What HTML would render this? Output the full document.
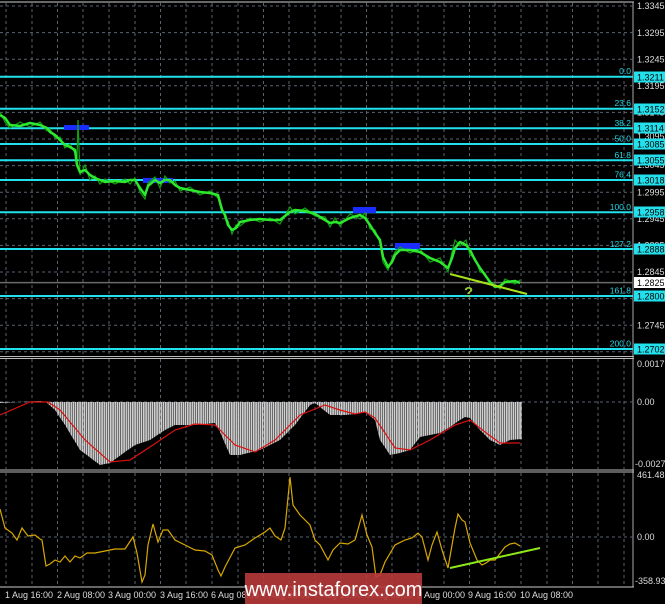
<!DOCTYPE html>
<html><head><meta charset="utf-8"><style>
html,body{margin:0;padding:0;background:#000;width:665px;height:604px;overflow:hidden}
svg{display:block}
text{font-family:"Liberation Sans",sans-serif}
</style></head><body>
<svg width="665" height="604" viewBox="0 0 665 604" xmlns="http://www.w3.org/2000/svg" font-size="9">
<defs>
<pattern id="hb" width="2.2" height="10" patternUnits="userSpaceOnUse">
<rect x="0" y="0" width="1.7" height="10" fill="#d0d0d0"/>
</pattern>
</defs>
<rect width="665" height="604" fill="#000"/>
<line x1="0" y1="2" x2="634" y2="2" stroke="#8a8a8a" stroke-width="1.5"/>
<line x1="633" y1="2" x2="633" y2="587" stroke="#aaa" stroke-width="1"/>
<line x1="0" y1="356.5" x2="634" y2="356.5" stroke="#bbb"/>
<line x1="0" y1="358.5" x2="634" y2="358.5" stroke="#bbb"/>
<line x1="0" y1="470" x2="634" y2="470" stroke="#bbb"/>
<line x1="0" y1="472" x2="634" y2="472" stroke="#bbb"/>
<line x1="0" y1="587" x2="634" y2="587" stroke="#ccc"/>
<g stroke="#5a6470" stroke-dasharray="3,3" stroke-width="1">
<path d="M6 3V356M32 3V356M57.5 3V356M83 3V356M109 3V356M135 3V356M160.5 3V356M186 3V356M212 3V356M238 3V356M263.5 3V356M289 3V356M315 3V356M341 3V356M366.5 3V356M392 3V356M418 3V356M444 3V356M469.5 3V356M495 3V356M521 3V356M547 3V356M572.5 3V356M598 3V356M624 3V356"/>
<path d="M6 359V470M32 359V470M57.5 359V470M83 359V470M109 359V470M135 359V470M160.5 359V470M186 359V470M212 359V470M238 359V470M263.5 359V470M289 359V470M315 359V470M341 359V470M366.5 359V470M392 359V470M418 359V470M444 359V470M469.5 359V470M495 359V470M521 359V470M547 359V470M572.5 359V470M598 359V470M624 359V470"/>
<path d="M6 473V587M32 473V587M57.5 473V587M83 473V587M109 473V587M135 473V587M160.5 473V587M186 473V587M212 473V587M238 473V587M263.5 473V587M289 473V587M315 473V587M341 473V587M366.5 473V587M392 473V587M418 473V587M444 473V587M469.5 473V587M495 473V587M521 473V587M547 473V587M572.5 473V587M598 473V587M624 473V587"/>
<path d="M0 6H633M0 32.6H633M0 59.2H633M0 85.8H633M0 112.4H633M0 139H633M0 165.6H633M0 192.2H633M0 218.8H633M0 245.4H633M0 272H633M0 298.6H633M0 325.2H633M0 351.8H633"/>
<path d="M0 402H633M0 537H633"/>
</g>
<line x1="0" y1="282.6" x2="633" y2="282.6" stroke="#6a6a6a" stroke-width="1.5"/>
<g stroke="#22e0ec" stroke-width="2">
<path d="M0 76.7H633M0 108.7H633M0 128.3H633M0 144H633M0 160.3H633M0 180H633M0 212.2H633M0 249H633M0 296H633M0 349H633"/>
</g>
<g fill="#22d8e4" text-anchor="end" font-size="8.5">
<text x="631" y="74">0.0</text><text x="631" y="106">23.6</text><text x="631" y="126">38.2</text>
<text x="631" y="141.5">50.0</text><text x="631" y="158">61.8</text><text x="631" y="177.5">76.4</text>
<text x="631" y="210">100.0</text><text x="631" y="247">127.2</text><text x="631" y="293.5">161.8</text><text x="631" y="346.5">200.0</text>
</g>
<g fill="#ddd">
<text x="637" y="9">1.3345</text><text x="637" y="36">1.3295</text><text x="637" y="62.5">1.3245</text>
<text x="637" y="89">1.3195</text><text x="637" y="115.5">1.3145</text><text x="637" y="139.5">1.3095</text>
<text x="637" y="168">1.3045</text><text x="637" y="195.5">1.2995</text><text x="637" y="222">1.2945</text>
<text x="637" y="248.5">1.2895</text><text x="637" y="275">1.2845</text><text x="637" y="301.5">1.2795</text>
<text x="637" y="328.5">1.2745</text>
<text x="637" y="367">0.00177</text><text x="637" y="405">0.00</text><text x="635" y="467">-0.00271</text>
<text x="637" y="478">461.4868</text><text x="637" y="540">0.00</text><text x="635" y="584">-358.938</text>
</g>
<g>
<rect x="634" y="71.5" width="31" height="11" fill="#22e0ec"/><text x="637" y="80.5" fill="#000">1.3211</text>
<rect x="634" y="103.5" width="31" height="11" fill="#22e0ec"/><text x="637" y="112.5" fill="#000">1.3152</text>
<rect x="634" y="122.5" width="31" height="11" fill="#22e0ec"/><text x="637" y="131.5" fill="#000">1.3114</text>
<rect x="634" y="138.5" width="31" height="11" fill="#22e0ec"/><text x="637" y="147.5" fill="#000">1.3085</text>
<rect x="634" y="154.5" width="31" height="11" fill="#22e0ec"/><text x="637" y="163.5" fill="#000">1.3055</text>
<rect x="634" y="174.5" width="31" height="11" fill="#22e0ec"/><text x="637" y="183.5" fill="#000">1.3018</text>
<rect x="634" y="206.5" width="31" height="11" fill="#22e0ec"/><text x="637" y="215.5" fill="#000">1.2958</text>
<rect x="634" y="243.5" width="31" height="11" fill="#22e0ec"/><text x="637" y="252.5" fill="#000">1.2888</text>
<rect x="634" y="277" width="31" height="11" fill="#fff"/><text x="637" y="286" fill="#000">1.2825</text>
<rect x="634" y="290.5" width="31" height="11" fill="#22e0ec"/><text x="637" y="299.5" fill="#000">1.2800</text>
<rect x="634" y="343.5" width="31" height="11" fill="#22e0ec"/><text x="637" y="352.5" fill="#000">1.2702</text>
</g>
<g fill="#1a2cff">
<rect x="64" y="125" width="25" height="5"/><rect x="143" y="178" width="30" height="5"/>
<rect x="353" y="207" width="23" height="6"/><rect x="395" y="243" width="25" height="6"/>
</g>
<polyline fill="none" stroke="#0fa00f" stroke-width="1.2" points="0,112 5,122 10,128 20,122 30,127 40,122 47,131 50,129 55,138 60,137 65,148 70,144 75,153 77,160 78,120 80,175 85,165 90,180 95,176 100,184 105,179 115,184 125,179 130,184 135,178 140,192 145,199 148,183 155,177 160,188 165,176 170,183 175,181 180,191 190,187 200,195 210,191 218,198 222,207 225,218 228,221 232,234 236,225 240,226 250,218 260,222 270,218 280,224 290,207 295,214 305,208 315,216 325,217 330,227 335,218 340,226 350,214 360,219 365,213 370,229 375,230 380,243 383,262 388,270 392,259 395,252 400,247 410,253 420,249 430,262 440,258 448,272 452,252 455,240 460,246 466,240 470,255 475,258 480,272 485,273 490,285 495,284 500,289 505,279 515,284 520,280"/>
<polyline fill="none" stroke="#2ee82e" stroke-width="2.5" stroke-linejoin="round" points="0,115 5,118 10,125 20,126 30,123 40,125 47,128 50,132 55,135 60,140 65,145 70,147 75,150 77,165 80,172 85,170 90,175 95,178 100,180 105,182 115,181 125,182 130,180 135,180 140,188 145,195 148,186 155,180 160,183 165,180 170,180 175,185 180,188 190,190 200,192 210,193 218,195 222,210 225,215 228,225 232,230 236,228 240,222 250,220 260,219 270,220 280,220 290,212 295,210 305,211 315,214 325,220 330,223 335,222 340,223 350,218 360,215 365,218 370,225 375,233 380,240 383,257 388,267 392,262 395,255 400,250 410,250 420,252 430,258 440,262 448,268 452,258 455,248 460,242 466,245 470,250 475,260 480,268 485,275 490,282 495,287 500,286 505,282 515,281 520,283"/>
<line x1="450" y1="274" x2="527" y2="294" stroke="#a6e21a" stroke-width="2"/>
<text x="464" y="297" fill="#9acd32" font-size="15" font-weight="bold">?</text>
<polygon fill="url(#hb)" points="0,402 522,402 522,439 510,440 500,445 490,440 480,430 470,418 465,417 460,420 450,427 440,433 420,437 410,450 400,453 390,455 380,440 375,420 365,412 355,414 345,415 330,415 315,403 310,405 295,425 280,440 260,450 240,455 230,455 220,432 215,423 195,425 175,425 165,430 150,440 135,445 125,452 110,463 100,465 80,450 65,425 55,410 46,402 40,401 0,403"/>
<polyline fill="none" stroke="#dd1010" stroke-width="1.2" points="0,415 30,402 48,402 60,410 85,440 110,462 130,460 150,447 175,430 195,424 215,425 235,445 255,452 275,440 300,415 325,405 340,410 355,414 365,412 375,418 395,448 410,450 430,440 455,425 470,420 485,432 500,443 520,443"/>
<polyline fill="none" stroke="#d8a800" stroke-width="1.2" points="0,509 5,528 12,533 17,540 22,528 28,536 35,535 40,539 42,540 46,566 50,564 55,560 60,562 65,556 70,562 75,556 80,558 87,553 95,553 105,551 115,549 125,549 133,537 137,553 142,582 145,575 148,545 153,524 158,542 163,530 168,530 175,540 185,545 195,550 205,551 212,555 218,570 221,576 225,567 235,548 245,545 255,538 265,532 270,528 275,536 281,540 285,528 290,477 293,505 300,515 310,525 315,540 320,545 328,560 333,550 340,543 348,544 355,540 362,515 367,535 372,547 376,577 380,575 385,562 395,545 405,540 412,538 418,533 422,537 428,560 432,545 437,532 442,550 448,568 455,528 458,514 462,520 465,522 470,543 477,560 482,565 486,563 490,560 495,560 505,547 510,544 515,543 520,546"/>
<line x1="450" y1="568" x2="540" y2="548" stroke="#8ee81a" stroke-width="2"/>
<g fill="#ddd">
<text x="5" y="598">1 Aug 16:00</text><text x="57" y="598">2 Aug 08:00</text><text x="108" y="598">3 Aug 00:00</text>
<text x="160" y="598">3 Aug 16:00</text><text x="211" y="598">6 Aug 08:00</text><text x="262" y="598">7 Aug 00:00</text>
<text x="314" y="598">7 Aug 16:00</text><text x="365" y="598">8 Aug 08:00</text><text x="417" y="598">9 Aug 00:00</text>
<text x="468" y="598">9 Aug 16:00</text><text x="520" y="598">10 Aug 08:00</text>
</g>
<rect x="245" y="573" width="177" height="31" fill="#b83a3a" opacity="0.9"/>
<text x="333.5" y="596" fill="#fff" font-size="20" text-anchor="middle">www.instaforex.com</text>
</svg>
</body></html>
